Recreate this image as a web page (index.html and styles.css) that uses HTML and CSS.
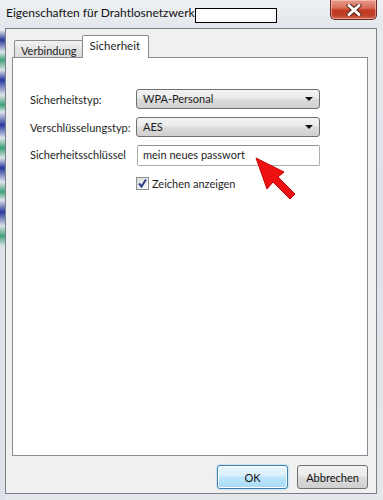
FILE: index.html
```html
<!DOCTYPE html>
<html>
<head>
  <meta charset="utf-8">
  <link rel="stylesheet" href="styles.css">
</head>
<body>
  <div class="window">
    <div class="titlebar">
      <span class="title">Eigenschaften für Drahtlosnetzwerk</span>
      <span class="namebox"></span>
      <span class="spacer"></span>
      <button class="close">
        <svg width="18" height="12" viewBox="0 0 18 12">
          <path d="M4 1.5 L14 10.5 M14 1.5 L4 10.5" stroke="#5a2418" stroke-width="5" stroke-linecap="round"/>
          <path d="M4 1.5 L14 10.5 M14 1.5 L4 10.5" stroke="#ffffff" stroke-width="3" stroke-linecap="round"/>
        </svg>
      </button>
    </div>

    <div class="client">
      <div class="tabs">
        <div class="tab">Verbindung</div>
        <div class="tab active">Sicherheit</div>
      </div>
      <div class="panel">
        <div class="form">
          <label>Sicherheitstyp:</label>
          <div class="combo">WPA-Personal<span class="caret"></span></div>

          <label>Verschlüsselungstyp:</label>
          <div class="combo">AES<span class="caret"></span></div>

          <label>Sicherheitsschlüssel</label>
          <div class="textbox">mein neues passwort</div>

          <span></span>
          <div class="check">
            <span class="box">
              <svg width="11" height="11" viewBox="0 0 11 11">
                <path d="M2 5.5 L4.5 8.5 L9 1.5" fill="none" stroke="#2b3f8c" stroke-width="2"/>
              </svg>
            </span>
            Zeichen anzeigen
          </div>
        </div>
      </div>
      <div class="buttons">
        <button class="btn default">OK</button>
        <button class="btn">Abbrechen</button>
      </div>
    </div>
  </div>

  <svg class="arrow" width="60" height="60" viewBox="0 0 60 60">
    <path d="M1 1 L29 15 L23 20 L40 37 L35 42 L18 25 L12 32 Z" fill="#ee1111" stroke="#c40000" stroke-width="1"/>
  </svg>
</body>
</html>
```

FILE: styles.css
```css
html, body {
  margin: 0;
  padding: 0;
}

body {
  width: 383px;
  height: 500px;
  overflow: hidden;
  position: relative;
  font-family: Lato, "Open Sans", sans-serif;
  font-size: 11px;
  color: #1e1e1e;
  background: linear-gradient(to bottom, #e9ecf0, #dde2e8 40%, #e4e7eb);
}

.window {
  height: 500px;
  display: flex;
  flex-direction: column;
  background:
    linear-gradient(to bottom,
      transparent 0, transparent 30px,
      #2a3b9c 40px, #dfe4ea 52px, #3fa27a 60px, #dfe4ea 70px,
      #2838a0 80px, #dfe4ea 95px, #3c9f78 105px, #dfe4ea 112px,
      #2a3aa2 125px, #dfe4ea 138px, #3aa076 148px, #dfe4ea 158px,
      #26359a 168px, #dfe4ea 182px, #3da278 192px, #dfe4ea 200px,
      #2a3a9c 212px, #dde2e8 226px, #41a37a 236px, #dde2e8 246px,
      #dde2e8 100%) left top / 5px 100% no-repeat;
}

.titlebar {
  height: 28px;
  display: flex;
  align-items: flex-start;
  padding-left: 6px;
  background: linear-gradient(to bottom, #eef1f4, #e3e7ec);
}

.title {
  margin-top: 5px;
  font-size: 12px;
  color: #111;
}

.namebox {
  width: 80px;
  height: 13px;
  margin-top: 8px;
  background: #fff;
  border: 1px solid #000;
}

.spacer {
  flex: 1;
}

.close {
  width: 47px;
  height: 20px;
  margin-right: 6px;
  padding: 0;
  border: 1px solid #6e2a20;
  border-top: none;
  border-radius: 0 0 5px 5px;
  background: linear-gradient(to bottom, #e89a8a 0, #d8705c 40%, #c23a22 55%, #be4028 80%, #d0644c 100%);
  box-shadow: inset 0 0 0 1px rgba(255, 220, 210, 0.5);
  display: flex;
  align-items: center;
  justify-content: center;
}

.client {
  flex: 1;
  margin: 0 6px 6px 5px;
  background: #f0f0f0;
  border: 1px solid #7b8088;
  display: flex;
  flex-direction: column;
  padding: 6px 8px 4px 6px;
}

.tabs {
  display: flex;
  align-items: flex-end;
  height: 22px;
  padding-left: 2px;
}

.tab {
  height: 17px;
  padding: 0 6px;
  line-height: 19px;
  border: 1px solid #898c95;
  border-bottom: none;
  border-radius: 2px 2px 0 0;
  background: linear-gradient(to bottom, #f3f3f3, #e3e3e3 50%, #d9d9d9);
  margin-bottom: -1px;
}

.tab.active {
  height: 22px;
  line-height: 19px;
  padding: 0 8px 0 7px;
  margin-left: -2px;
  background: #fff;
  position: relative;
  z-index: 1;
  font-size: 11.5px;
}

.panel {
  flex: 1;
  background: #fff;
  border: 1px solid #898c95;
  padding: 31px 0 0 17px;
}

.form {
  display: grid;
  grid-template-columns: 106px 184px;
  grid-template-rows: 20px 20px 21px 15px;
  row-gap: 8px;
  align-items: center;
}

.form label:nth-of-type(3) {
  margin-top: -2px;
}

.combo {
  height: 18px;
  line-height: 18px;
  padding-left: 6px;
  border: 1px solid #707070;
  border-radius: 3px;
  background: linear-gradient(to bottom, #f3f3f3, #ebebeb 45%, #dddddd 50%, #cfcfcf);
  position: relative;
}

.caret {
  position: absolute;
  right: 6px;
  top: 7px;
  border-left: 4px solid transparent;
  border-right: 4px solid transparent;
  border-top: 4px solid #111;
}

.textbox {
  height: 19px;
  line-height: 18px;
  margin-left: 1px;
  padding-left: 5px;
  background: #fff;
  border: 1px solid #abadb3;
  border-top-color: #8f9299;
  border-radius: 2px;
}

.check {
  display: flex;
  align-items: center;
  gap: 3px;
  margin-top: 3px;
}

.box {
  width: 11px;
  height: 11px;
  border: 1px solid #8e8f8f;
  background: linear-gradient(135deg, #dcdcdc, #fbfbfb);
  display: flex;
}

.buttons {
  display: flex;
  justify-content: flex-end;
  gap: 9px;
  margin-top: 9px;
}

.btn {
  width: 71px;
  height: 24px;
  font-family: Lato, "Open Sans", sans-serif;
  font-size: 11px;
  color: #111;
  border: 1px solid #707070;
  border-radius: 3px;
  background: linear-gradient(to bottom, #f2f2f2, #ebebeb 45%, #dddddd 50%, #cfcfcf);
  padding: 0;
}

.btn.default {
  border-color: #3c7fb1;
  background: linear-gradient(to bottom, #eaf6fd, #d9f0fc 45%, #bee6fd 50%, #a7d9f5);
  box-shadow: 0 0 2px #7fc4ea, inset 0 0 0 1px #ffffff;
}

.arrow {
  position: absolute;
  left: 255px;
  top: 157px;
}
```
